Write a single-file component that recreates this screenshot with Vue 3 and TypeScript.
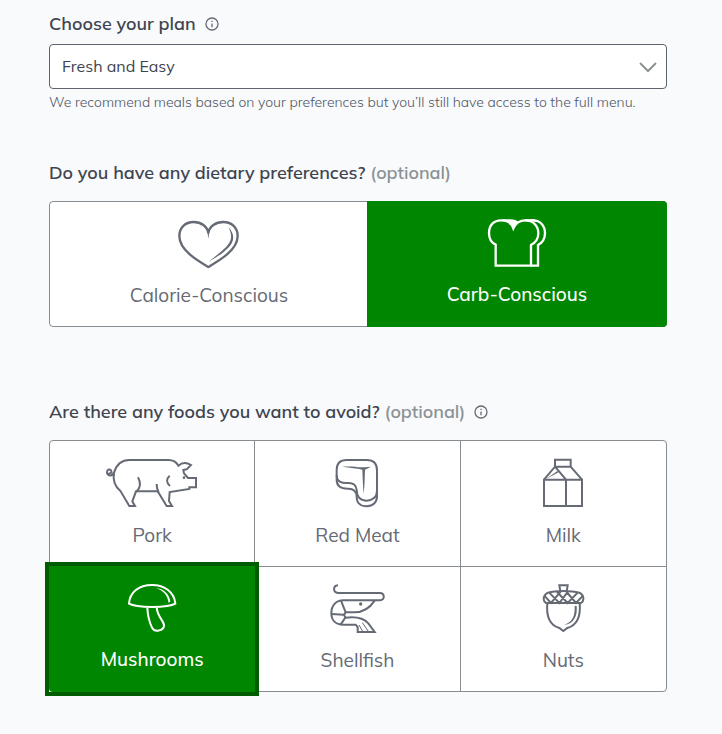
<script setup lang="ts">
import { ref } from 'vue'

interface Stroke {
  d: string
  kind?: 'fill' | 'thin'
}

interface Choice {
  id: string
  label: string
  viewBox: string
  width: number
  strokes: Stroke[]
}

const plan = ref('fresh')
const diets = ref<string[]>(['carb'])
const avoided = ref<string[]>(['mushrooms'])
const active = ref('mushrooms')

const dietChoices: Choice[] = [
  {
    id: 'calorie',
    label: 'Calorie-Conscious',
    viewBox: '36 40 189 150',
    width: 63,
    strokes: [
      { d: 'M130 184 C96 164 43 133 43 91 C43 66 61 49 86 49 C108 49 127 62 130 82 C133 62 152 49 175 49 C200 49 218 66 218 91 C218 133 164 164 130 184 Z' },
      { d: 'M127 78 L130 99 L133 78 Z', kind: 'fill' },
      { d: 'M190 64 C209 84 210 106 190 126 C172 144 152 157 131 168 C151 152 168 139 184 123 C202 104 202 88 190 64 Z', kind: 'fill' },
    ],
  },
  {
    id: 'carb',
    label: 'Carb-Conscious',
    viewBox: '36 39 180 150',
    width: 60,
    strokes: [
      { d: 'M62 182 V119 C49 113 42 100 42 84 C42 60 57 46 78 46 C96 46 110 55 115 70 C122 54 135 46 151 46 C174 46 190 62 190 85 C190 101 182 113 168 120 V182 Z' },
      { d: 'M151 46 H174 C196 46 210 62 210 85 C210 101 203 113 189 120 V182 H168' },
      { d: 'M78 43 H107 C118 43 125 46 130 51 L116 73 C112 60 104 52 92 47 Z', kind: 'fill' },
      { d: 'M151 43 H180 L184 51 C176 48 166 47 151 48 Z', kind: 'fill' },
    ],
  },
]

const foodChoices: Choice[] = [
  {
    id: 'pork',
    label: 'Pork',
    viewBox: '30 39 282 150',
    width: 94,
    strokes: [
      { d: 'M57 83 C65 57 80 45 103 45 H220 C235 45 245 52 250 62 C261 52 274 51 288 60 L275 73 L265 75 L267 85 L279 99 H303 V127 H283 V132 L224 141 L222 168 L231 183 H215 L188 139 H123 L112 169 L120 183 H103 L77 139 C60 125 53 105 57 83 Z' },
      { d: 'M129 97 C138 113 136 129 124 140 M185 117 C185 130 187 136 191 142' },
      { d: 'M224 92 C213 102 214 114 225 123' },
      { d: 'M57 82 C52 97 36 92 36 82 C36 73 46 70 49 78 C51 84 44 87 42 83' },
      { d: 'M263 98 a4 4 0 1 0 8 0 a4 4 0 1 0 -8 0', kind: 'fill' },
    ],
  },
  {
    id: 'red-meat',
    label: 'Red Meat',
    viewBox: '45 39 138 150',
    width: 46,
    strokes: [
      { d: 'M83 45 H143 C164 45 174 56 174 76 V138 C174 156 160 167 143 167 C124 167 113 155 113 135 C112 121 102 113 87 114 C67 116 53 108 53 92 V75 C53 56 64 45 83 45 Z' },
      { d: 'M53 91 V105 C53 123 66 131 86 131 C104 130 113 140 113 155 C113 174 125 184 143 184 C162 184 174 172 174 154 V137' },
      { d: 'M70 65 C92 63 113 66 127 67 H137 L156 65 L138 74 C137 98 137 123 134 147 C132 124 131 99 130 74 C114 69 94 69 70 65 Z', kind: 'fill' },
    ],
  },
  {
    id: 'milk',
    label: 'Milk',
    viewBox: '51 39 126 150',
    width: 42,
    strokes: [
      { d: 'M90 65 V44 H137 V65 M57 104 H171 V183 H57 Z M57 104 L90 65 H137 L171 104 M90 65 L123 104 V183' },
      { d: 'M63 102 L97 78 L101 82 Z', kind: 'fill' },
    ],
  },
  {
    id: 'mushrooms',
    label: 'Mushrooms',
    viewBox: '36 39 150 150',
    width: 50,
    strokes: [
      { d: 'M42 101 C44 66 72 45 111 45 C149 45 178 66 181 101 C160 114 64 114 42 101 Z' },
      { d: 'M97 113 C98 137 103 156 111 173 C118 188 146 183 147 167 C148 153 128 143 125 113' },
      { d: 'M122 54 C146 56 163 72 166 94 L161 99 C158 75 145 62 122 54 Z', kind: 'fill' },
    ],
  },
  {
    id: 'shellfish',
    label: 'Shellfish',
    viewBox: '27 42 171 150',
    width: 57,
    strokes: [
      { d: 'M54 46 C37 48 39 69 56 69 H180 C194 69 196 91 180 91 H70 C48 91 34 107 34 129 C34 151 47 164 70 164 H107 L113 171 V186 H164 L145 160 C130 143 108 139 77 143 L72 135 L77 127 H104 C132 127 150 113 164 92' },
      { d: 'M63 92 L77 127 M34 132 L72 134 M62 164 L77 141' },
      { d: 'M117 165 L128 184 M127 158 L145 184', kind: 'thin' },
      { d: 'M117 102 a5 5 0 1 0 10 0 a5 5 0 1 0 -10 0', kind: 'fill' },
    ],
  },
  {
    id: 'nuts',
    label: 'Nuts',
    viewBox: '51 42 129 150',
    width: 43,
    strokes: [
      { d: 'M106 64 L103 46 H128 L125 64 M63 99 C51 91 56 74 69 68 C92 61 138 61 163 68 C176 74 180 91 168 99 Z' },
      { d: 'M67 100 C64 132 69 164 103 174 L115 183 L127 174 C161 164 167 132 164 100' },
      { d: 'M58 77 L78 99 L107 65 M72 67 L103 99 L127 67 M96 66 L128 99 L158 68 M125 66 L153 99 L174 77' },
      { d: 'M149 108 H155 C158 139 146 161 118 165 C143 154 150 140 149 108 Z', kind: 'fill' },
    ],
  },
]
</script>

<template>
  <main class="page">
    <section class="plan">
      <div class="heading">
        <label for="plan">Choose your plan</label>
        <button class="info" type="button" aria-label="About plans">
          <svg viewBox="0 0 14 14" width="14" height="14">
            <circle cx="7" cy="7" r="6" />
            <path d="M7 6.4 V10.2 M7 3.8 V5.1" />
          </svg>
        </button>
      </div>
      <div class="select-box">
        <select id="plan" v-model="plan">
          <option value="fresh">Fresh and Easy</option>
        </select>
        <svg class="chevron" viewBox="0 0 18 12" width="18" height="12">
          <path d="M1 2 L9 10 L17 2" />
        </svg>
      </div>
      <p class="hint">We recommend meals based on your preferences but you’ll still have access to the full menu.</p>
    </section>

    <fieldset class="diets">
      <legend class="heading">
        <span>Do you have any dietary preferences? <span class="optional">(optional)</span></span>
      </legend>
      <div class="tiles pair">
        <label
          v-for="choice in dietChoices"
          :key="choice.id"
          class="tile"
          :class="{ selected: diets.includes(choice.id) }"
        >
          <input v-model="diets" type="checkbox" :value="choice.id" />
          <span class="face">
            <svg class="icon" :viewBox="choice.viewBox" :width="choice.width" height="50" aria-hidden="true">
              <path v-for="stroke in choice.strokes" :key="stroke.d" :d="stroke.d" :class="stroke.kind" />
            </svg>
            <span>{{ choice.label }}</span>
          </span>
        </label>
      </div>
    </fieldset>

    <fieldset class="foods">
      <legend class="heading">
        <span>Are there any foods you want to avoid? <span class="optional">(optional)</span></span>
        <button class="info" type="button" aria-label="About foods to avoid">
          <svg viewBox="0 0 14 14" width="14" height="14">
            <circle cx="7" cy="7" r="6" />
            <path d="M7 6.4 V10.2 M7 3.8 V5.1" />
          </svg>
        </button>
      </legend>
      <div class="tiles grid">
        <label
          v-for="choice in foodChoices"
          :key="choice.id"
          class="tile"
          :class="{ selected: avoided.includes(choice.id), active: active === choice.id }"
        >
          <input v-model="avoided" type="checkbox" :value="choice.id" @change="active = choice.id" />
          <span class="face">
            <svg class="icon" :viewBox="choice.viewBox" :width="choice.width" height="50" aria-hidden="true">
              <path v-for="stroke in choice.strokes" :key="stroke.d" :d="stroke.d" :class="stroke.kind" />
            </svg>
            <span>{{ choice.label }}</span>
          </span>
        </label>
      </div>
    </fieldset>
  </main>
</template>

<style>
body {
  margin: 0;
  background: #f8fafc;
}
</style>

<style scoped>
.page {
  padding: 12px 55px 42px 49px;
  color: #3f4550;
  font-family: Muli, Mulish, Lato, sans-serif;
}

fieldset {
  min-width: 0;
  margin: 0;
  padding: 0;
  border: 0;
}

.heading {
  display: flex;
  align-items: center;
  gap: 9px;
  padding: 0;
  font-size: 18px;
  font-weight: 600;
  line-height: 24px;
}

.optional {
  color: #8b9295;
}

.info {
  display: flex;
  padding: 0;
  border: 0;
  background: none;
  cursor: pointer;
}

.info svg {
  fill: none;
  stroke: #666b75;
  stroke-width: 1.3;
}

.select-box {
  position: relative;
  margin-top: 8px;
}

.select-box select {
  display: block;
  width: 100%;
  height: 45px;
  padding: 0 40px 2px 12px;
  border: 1px solid #5f636e;
  border-radius: 4px;
  appearance: none;
  background: #fff;
  color: #3f4550;
  font-family: inherit;
  font-size: 16px;
}

.chevron {
  position: absolute;
  top: 17px;
  right: 10px;
  fill: none;
  stroke: #8e9193;
  stroke-width: 2;
  pointer-events: none;
}

.hint {
  margin: 3px 0 0;
  color: #4f5663;
  font-size: 14px;
  font-weight: 300;
  line-height: 20px;
}

.diets {
  margin-top: 49px;
}

.foods {
  margin-top: 73px;
}

.tiles {
  margin-top: 16px;
  border: 1px solid #868c90;
  border-radius: 4px;
  background: #fff;
}

.pair {
  display: flex;
}

.pair .tile {
  flex: 1 1 auto;
}

.grid {
  display: grid;
  grid-template-columns: repeat(3, 1fr);
}

.tile {
  position: relative;
  display: flex;
  color: #656a74;
  font-size: 19px;
  line-height: 24px;
  cursor: pointer;
}

.tile input {
  position: absolute;
  inset: 0;
  width: 100%;
  height: 100%;
  margin: 0;
  opacity: 0;
  cursor: pointer;
}

.face {
  display: flex;
  flex: 1;
  flex-direction: column;
  align-items: center;
  gap: 14px;
  padding: 17px 0 19px;
}

.grid .tile:not(:nth-child(3n)) {
  border-right: 1px solid #868c90;
}

.grid .tile:nth-child(-n + 3) {
  border-bottom: 1px solid #868c90;
}

.grid .tile:nth-child(-n + 3) .face {
  gap: 15px;
}

.tile.selected {
  color: #fff;
  font-weight: 500;
}

.pair .tile.selected {
  overflow: hidden;
  margin: -1px;
}

.pair .tile:first-child {
  border-radius: 4px 0 0 4px;
}

.pair .tile:last-child {
  border-radius: 0 4px 4px 0;
}

.grid .tile.selected {
  margin: -1px 0 -1px -1px;
  border-right: 0;
  background: #fff;
}

.tile.selected .face {
  background: #008600;
}

.tile.active {
  z-index: 1;
  outline: 4px solid #005c00;
}

.grid .tile:nth-child(4) .face {
  border-bottom-left-radius: 4px;
}

.icon {
  fill: none;
  stroke: currentColor;
  stroke-width: 6;
}

.pair .icon {
  stroke-width: 7;
}

.icon .fill {
  fill: currentColor;
  stroke: none;
}

.icon .thin {
  stroke-width: 3;
}
</style>
